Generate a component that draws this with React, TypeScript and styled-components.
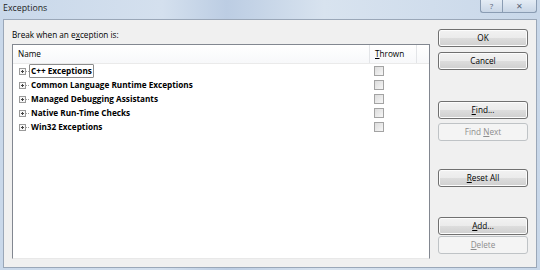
import React from "react";
import styled, { createGlobalStyle } from "styled-components";

const GlobalStyle = createGlobalStyle`
    html, body {
        margin: 0;
        padding: 0;
        background: #d6e0ec;
    }
    body {
        font-family: "Open Sans", "Noto Sans", "Liberation Sans", sans-serif;
        font-size: 8.2px;
        color: #000;
    }
`;

const Window = styled.div`
    width: 540px;
    height: 270px;
    display: flex;
    flex-direction: column;
    background: linear-gradient(90deg, #c9d8ea 0%, #d4e0ee 30%, #bccde3 42%, #d8e3ef 60%, #c8d7e9 100%);
    box-sizing: border-box;
    overflow: hidden;
`;

const TitleBar = styled.div`
    height: 19px;
    display: flex;
    align-items: flex-start;
    justify-content: space-between;
    padding-left: 3px;
`;

const Title = styled.span`
    font-size: 8.8px;
    line-height: 16px;
    color: #1e1e1e;
`;

const Caption = styled.div`
    display: flex;
    margin-right: 3px;
`;

const CaptionButton = styled.div<{ $w: number }>`
    width: ${(p) => p.$w}px;
    height: 12px;
    border: 1px solid #8a9cb3;
    border-top: none;
    background: linear-gradient(#e4ecf5, #c9d6e6);
    display: flex;
    align-items: center;
    justify-content: center;
    font-size: 8px;
    line-height: 10px;
    color: #5a6576;
    &:first-child {
        border-bottom-left-radius: 3px;
        border-right: none;
    }
    &:last-child {
        border-bottom-right-radius: 3px;
    }
`;

const Body = styled.div`
    flex: 1;
    margin: 0 3px 2px 3px;
    border: 1px solid #9aa7b8;
    background: #f0f0f0;
    display: flex;
    padding: 9px 8px 8px 8px;
    gap: 8px;
    min-height: 0;
`;

const Main = styled.div`
    flex: 1;
    display: flex;
    flex-direction: column;
`;

const Label = styled.div`
    line-height: 12px;
    margin-bottom: 3px;
`;

const List = styled.div`
    flex: 1;
    background: #fff;
    border: 1px solid #828790;
    border-bottom-color: #e8e8e8;
    display: flex;
    flex-direction: column;
`;

const Header = styled.div`
    display: flex;
    height: 18px;
    border-bottom: 1px solid #eaeaea;
    background: linear-gradient(#ffffff, #f7f8fa);
`;

const HeaderCell = styled.div<{ $w?: number }>`
    ${(p) => (p.$w ? `width: ${p.$w}px;` : "flex: 1;")}
    line-height: 18px;
    padding-left: 5px;
    box-sizing: border-box;
    border-right: 1px solid #e3e5e8;
    &:last-child {
        border-right: none;
    }
`;

const Rows = styled.div``;

const Row = styled.div`
    display: flex;
    height: 14px;
    align-items: center;
`;

const NameCell = styled.div`
    width: 357px;
    display: flex;
    align-items: center;
    padding-left: 6px;
    box-sizing: border-box;
`;

const Expander = styled.svg`
    width: 7px;
    height: 7px;
    flex: none;
`;

const Dots = styled.span`
    width: 3px;
    border-top: 1px dotted #a0a0a0;
`;

const ItemText = styled.span<{ $focus?: boolean }>`
    font-weight: 700;
    line-height: 12px;
    padding: 0 1px;
    border: 1px ${(p) => (p.$focus ? "solid #8c8c8c" : "solid transparent")};
    border-radius: 1px;
`;

const ThrownCell = styled.div`
    width: 47px;
    display: flex;
    padding-left: 4px;
    box-sizing: border-box;
`;

const Check = styled.div`
    width: 8px;
    height: 8px;
    border: 1px solid #a3a3a3;
    background: linear-gradient(135deg, #dcdcdc, #f6f6f6);
`;

const Side = styled.div`
    width: 90px;
    display: flex;
    flex-direction: column;
`;

const Button = styled.div<{ $top: number; $disabled?: boolean }>`
    margin-top: ${(p) => p.$top}px;
    height: 18px;
    box-sizing: border-box;
    border-radius: 3px;
    display: flex;
    align-items: center;
    justify-content: center;
    line-height: 12px;
    border: 1px solid ${(p) => (p.$disabled ? "#bfc3c6" : "#707070")};
    background: ${(p) =>
        p.$disabled
            ? "#f4f4f4"
            : "linear-gradient(#f2f2f2 0%, #ebebeb 50%, #dddddd 51%, #cfcfcf 100%)"};
    color: ${(p) => (p.$disabled ? "#8d8d8d" : "#000")};
    box-shadow: inset 0 0 0 1px ${(p) => (p.$disabled ? "transparent" : "#fcfcfc")};
`;

const Key = styled.u`
    text-decoration-thickness: 1px;
    text-underline-offset: 1px;
`;

const items = [
    "C++ Exceptions",
    "Common Language Runtime Exceptions",
    "Managed Debugging Assistants",
    "Native Run-Time Checks",
    "Win32 Exceptions",
];

// gaps between the buttons follow the dialog's grouping
const buttons: { before?: string; key?: string; after?: string; top: number; disabled?: boolean }[] = [
    { before: "OK", top: 0 },
    { before: "Cancel", top: 5 },
    { key: "F", after: "ind...", top: 31 },
    { before: "Find ", key: "N", after: "ext", top: 4, disabled: true },
    { key: "R", after: "eset All", top: 28 },
    { key: "A", after: "dd...", top: 30 },
    { key: "D", after: "elete", top: 1, disabled: true },
];

function PlusBox() {
    return (
        <Expander viewBox="0 0 7 7">
            <rect x="0.5" y="0.5" width="6" height="6" fill="#f7f7f7" stroke="#9a9a9a" />
            <path d="M2 3.5h3M3.5 2v3" stroke="#444" strokeWidth="1" />
        </Expander>
    );
}

export default function App() {
    return (
        <>
            <GlobalStyle />
            <Window>
                <TitleBar>
                    <Title>Exceptions</Title>
                    <Caption>
                        <CaptionButton $w={21}>?</CaptionButton>
                        <CaptionButton $w={33}>✕</CaptionButton>
                    </Caption>
                </TitleBar>
                <Body>
                    <Main>
                        <Label>
                            Break when an e<Key>x</Key>ception is:
                        </Label>
                        <List>
                            <Header>
                                <HeaderCell $w={357}>Name</HeaderCell>
                                <HeaderCell $w={47}>
                                    <Key>T</Key>hrown
                                </HeaderCell>
                                <HeaderCell />
                            </Header>
                            <Rows>
                                {items.map((name, i) => (
                                    <Row key={name}>
                                        <NameCell>
                                            <PlusBox />
                                            <Dots />
                                            <ItemText $focus={i === 0}>{name}</ItemText>
                                        </NameCell>
                                        <ThrownCell>
                                            <Check />
                                        </ThrownCell>
                                    </Row>
                                ))}
                            </Rows>
                        </List>
                    </Main>
                    <Side>
                        {buttons.map((b, i) => (
                            <Button key={i} $top={b.top} $disabled={b.disabled}>
                                <span>
                                    {b.before}
                                    {b.key && <Key>{b.key}</Key>}
                                    {b.after}
                                </span>
                            </Button>
                        ))}
                    </Side>
                </Body>
            </Window>
        </>
    );
}
